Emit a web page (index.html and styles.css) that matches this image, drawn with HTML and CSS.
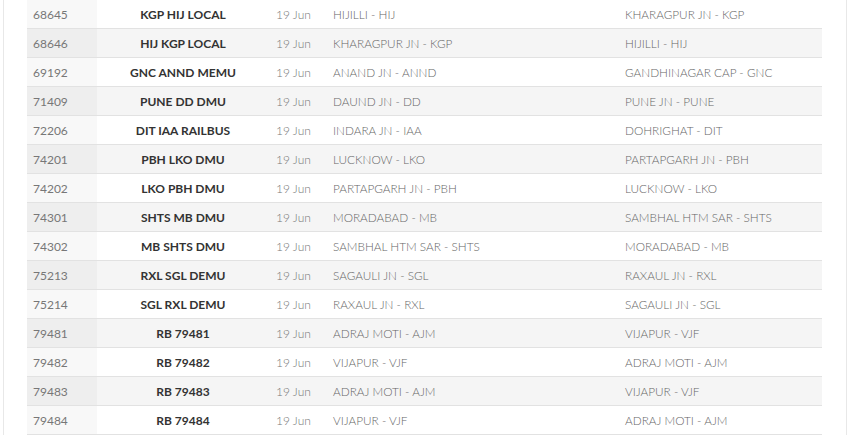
FILE: index.html
```html
<!DOCTYPE html>
<html>
<head>
<meta charset="utf-8">
<link rel="stylesheet" href="styles.css">
</head>
<body>
<div class="frame">
<table class="trains">
<tbody>
<tr><td class="num">68645</td><td class="name">KGP HIJ LOCAL</td><td class="date">19 Jun</td><td class="st">HIJILLI - HIJ</td><td class="st">KHARAGPUR JN - KGP</td></tr>
<tr><td class="num">68646</td><td class="name">HIJ KGP LOCAL</td><td class="date">19 Jun</td><td class="st">KHARAGPUR JN - KGP</td><td class="st">HIJILLI - HIJ</td></tr>
<tr><td class="num">69192</td><td class="name">GNC ANND MEMU</td><td class="date">19 Jun</td><td class="st">ANAND JN - ANND</td><td class="st">GANDHINAGAR CAP - GNC</td></tr>
<tr><td class="num">71409</td><td class="name">PUNE DD DMU</td><td class="date">19 Jun</td><td class="st">DAUND JN - DD</td><td class="st">PUNE JN - PUNE</td></tr>
<tr><td class="num">72206</td><td class="name">DIT IAA RAILBUS</td><td class="date">19 Jun</td><td class="st">INDARA JN - IAA</td><td class="st">DOHRIGHAT - DIT</td></tr>
<tr><td class="num">74201</td><td class="name">PBH LKO DMU</td><td class="date">19 Jun</td><td class="st">LUCKNOW - LKO</td><td class="st">PARTAPGARH JN - PBH</td></tr>
<tr><td class="num">74202</td><td class="name">LKO PBH DMU</td><td class="date">19 Jun</td><td class="st">PARTAPGARH JN - PBH</td><td class="st">LUCKNOW - LKO</td></tr>
<tr><td class="num">74301</td><td class="name">SHTS MB DMU</td><td class="date">19 Jun</td><td class="st">MORADABAD - MB</td><td class="st">SAMBHAL HTM SAR - SHTS</td></tr>
<tr><td class="num">74302</td><td class="name">MB SHTS DMU</td><td class="date">19 Jun</td><td class="st">SAMBHAL HTM SAR - SHTS</td><td class="st">MORADABAD - MB</td></tr>
<tr><td class="num">75213</td><td class="name">RXL SGL DEMU</td><td class="date">19 Jun</td><td class="st">SAGAULI JN - SGL</td><td class="st">RAXAUL JN - RXL</td></tr>
<tr><td class="num">75214</td><td class="name">SGL RXL DEMU</td><td class="date">19 Jun</td><td class="st">RAXAUL JN - RXL</td><td class="st">SAGAULI JN - SGL</td></tr>
<tr><td class="num">79481</td><td class="name">RB 79481</td><td class="date">19 Jun</td><td class="st">ADRAJ MOTI - AJM</td><td class="st">VIJAPUR - VJF</td></tr>
<tr><td class="num">79482</td><td class="name">RB 79482</td><td class="date">19 Jun</td><td class="st">VIJAPUR - VJF</td><td class="st">ADRAJ MOTI - AJM</td></tr>
<tr><td class="num">79483</td><td class="name">RB 79483</td><td class="date">19 Jun</td><td class="st">ADRAJ MOTI - AJM</td><td class="st">VIJAPUR - VJF</td></tr>
<tr><td class="num">79484</td><td class="name">RB 79484</td><td class="date">19 Jun</td><td class="st">VIJAPUR - VJF</td><td class="st">ADRAJ MOTI - AJM</td></tr>
</tbody>
</table>
</div>
</body>
</html>
```
FILE: styles.css
```css
html, body {
  margin: 0;
  padding: 0;
  background: #ffffff;
}
body {
  font-family: Lato, "Open Sans", sans-serif;
  font-size: 12px;
  color: #666;
  overflow: hidden;
}
.frame {
  margin: 0 3px;
  border-left: 1px solid #e8e8e8;
  border-right: 1px solid #e8e8e8;
  padding: 0 24px 0 23px;
  height: 435px;
}
.trains {
  width: 100%;
  border-collapse: collapse;
  table-layout: fixed;
}
.trains td {
  height: 28px;
  padding: 0 6px;
  border-bottom: 1px solid #e2e2e2;
  white-space: nowrap;
  vertical-align: middle;
}
.trains tr:nth-child(even) td {
  background: #f5f5f5;
}
.trains td.num {
  width: 58px;
  background: #f8f8f8;
  color: #777;
  font-weight: 400;
}
.trains tr:nth-child(even) td.num {
  background: #eeeeee;
}
.trains td.name {
  width: 160px;
  text-align: center;
  font-weight: 700;
  color: #333;
}
.trains td.date {
  width: 45px;
  padding-left: 7px;
  font-weight: 300;
  color: #777;
}
.trains td.st {
  font-weight: 300;
  font-size: 11.75px;
  color: #666;
}
.trains td.st:nth-child(4) {
  width: 280px;
}
```
